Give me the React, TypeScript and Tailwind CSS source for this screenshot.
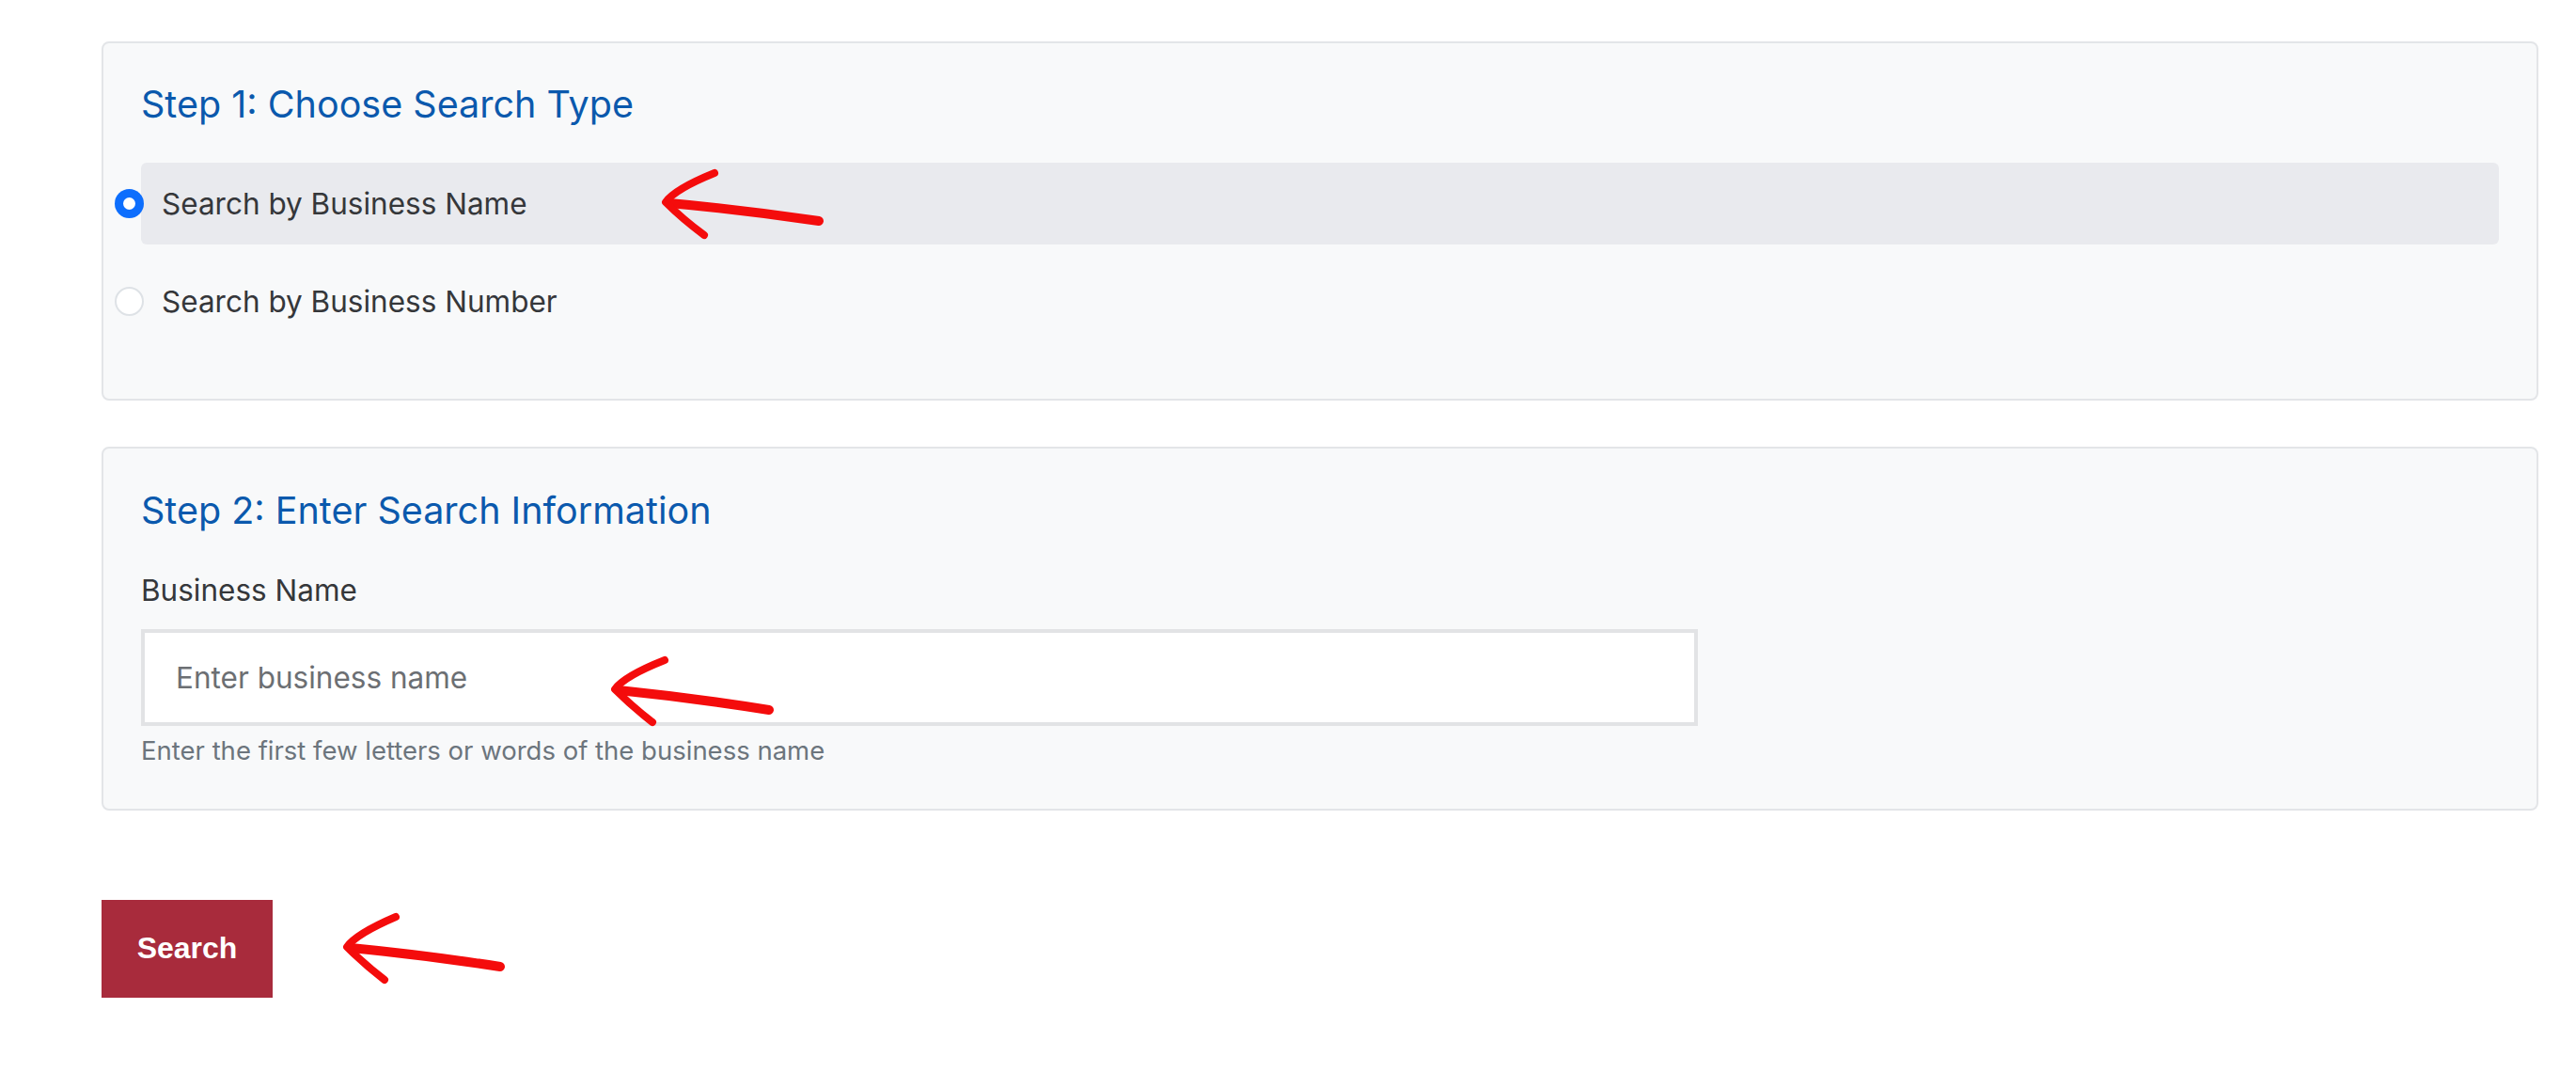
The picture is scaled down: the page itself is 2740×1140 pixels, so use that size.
import React, { useState } from "react"

const font = { fontFamily: "Inter, 'Noto Sans', sans-serif" }

function Arrow({ tip, up, low, tail }: { tip: number[]; up: number[]; low: number[]; tail: number[] }) {
  const midX = (tip[0] + tail[0]) / 2
  const midY = (tip[1] + tail[1]) / 2 - 2
  return (
    <g fill="none" stroke="#f40c0c" strokeLinecap="round" strokeLinejoin="round">
      <path d={`M${tail[0]},${tail[1]} Q${midX},${midY} ${tip[0] + 4},${tip[1] + 1}`} strokeWidth={10} />
      <path
        d={`M${up[0]},${up[1]} Q${tip[0] + 10},${tip[1] - 14} ${tip[0]},${tip[1]} Q${tip[0] + 18},${tip[1] + 18} ${low[0]},${low[1]}`}
        strokeWidth={8}
      />
    </g>
  )
}

function RadioRow({
  label,
  checked,
  onSelect,
}: {
  label: string
  checked: boolean
  onSelect: () => void
}) {
  return (
    <label
      onClick={onSelect}
      className={`flex h-[87px] cursor-pointer items-center rounded-[6px] pl-[22px] ${
        checked ? "bg-[#e9eaee]" : ""
      }`}
    >
      <span
        className={`-ml-[50px] mr-[19px] flex h-[31px] w-[31px] shrink-0 items-center justify-center rounded-full ${
          checked ? "bg-[#0d6efd]" : "border-2 border-[#dee2e6] bg-white"
        }`}
      >
        {checked && <span className="h-[13px] w-[13px] rounded-full bg-white" />}
      </span>
      <span className="text-[31.5px] leading-[48px] text-[#35373a]">{label}</span>
    </label>
  )
}

export default function App() {
  const [type, setType] = useState("name")

  return (
    <div className="relative min-h-[1140px] w-full bg-white" style={font}>
      <div className="pl-[108px] pr-[40px] pt-[44px]">
        <div className="rounded-[8px] border-2 border-[#e3e5e8] bg-[#f8f9fa] px-[40px] pb-[60px] pt-[41px]">
          <h2 className="text-[39.5px] font-normal leading-[48px] text-[#0b59ad]">
            Step 1: Choose Search Type
          </h2>
          <div className="mt-[38px] flex flex-col gap-[17px]">
            <RadioRow
              label="Search by Business Name"
              checked={type === "name"}
              onSelect={() => setType("name")}
            />
            <RadioRow
              label="Search by Business Number"
              checked={type === "number"}
              onSelect={() => setType("number")}
            />
          </div>
        </div>

        <div className="mt-[49px] rounded-[8px] border-2 border-[#e3e5e8] bg-[#f8f9fa] px-[40px] pb-[42px] pt-[42px]">
          <h2 className="text-[39.5px] font-normal leading-[48px] text-[#0b59ad]">
            Step 2: Enter Search Information
          </h2>
          <div className="mt-[37px] text-[31.5px] leading-[48px] text-[#35373a]">Business Name</div>
          <input
            type="text"
            placeholder="Enter business name"
            className="mt-[17px] block h-[103px] w-[1656px] border-4 border-[#e2e3e5] bg-white pl-[33px] text-[31.5px] text-[#333333] outline-none placeholder:text-[#6c6f73]"
            style={font}
          />
          <div className="mt-[6px] text-[27.5px] leading-[40px] text-[#6c757d]">
            Enter the first few letters or words of the business name
          </div>
        </div>

        <button
          className="mt-[95px] flex h-[104px] w-[182px] items-center justify-center bg-[#a82b3c] pb-[3px] text-[32px] font-bold text-white"
          style={{ fontFamily: "'Liberation Sans', Arial, sans-serif" }}
        >
          Search
        </button>
      </div>

      <svg className="pointer-events-none absolute left-0 top-0" width="2740" height="1140">
        <Arrow tip={[708, 215]} up={[760, 184]} low={[749, 250]} tail={[871, 235]} />
        <Arrow tip={[654, 733]} up={[707, 702]} low={[694, 768]} tail={[818, 755]} />
        <Arrow tip={[369, 1007]} up={[421, 975]} low={[409, 1042]} tail={[532, 1028]} />
      </svg>
    </div>
  )
}
